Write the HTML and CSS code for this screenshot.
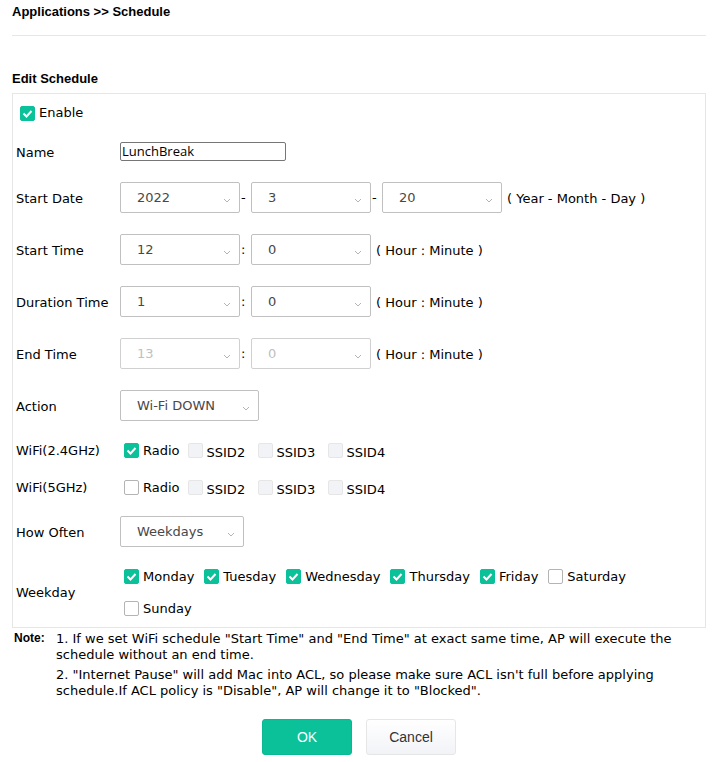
FILE: index.html
```
<!DOCTYPE html>
<html lang="en">
<head>
    <meta charset="UTF-8">
    <meta name="viewport" content="width=device-width, initial-scale=1.0">
    <title>Applications - Schedule</title>
    <link rel="stylesheet" href="styles.css">
</head>
<body>
    <h1>Applications &gt;&gt; Schedule</h1>
    <h2>Edit Schedule</h2>
    <form id="scheduleForm">
        <div class="panel">
            <div class="enable-row">
                <label class="check"><input type="checkbox" name="enable" checked>Enable</label>
            </div>

            <div class="row name-row">
                <label for="name">Name</label>
                <div class="field">
                    <input type="text" class="text-input" id="name" name="name" value="LunchBreak">
                </div>
            </div>

            <div class="row">
                <label for="startYear">Start Date</label>
                <div class="field">
                    <select id="startYear" name="startYear"><option>2022</option></select>
                    <span class="sep">-</span>
                    <select name="startMonth" aria-label="Start month"><option>3</option></select>
                    <span class="sep">-</span>
                    <select name="startDay" aria-label="Start day"><option>20</option></select>
                    <span class="hint">( Year - Month - Day )</span>
                </div>
            </div>

            <div class="row">
                <label for="startHour">Start Time</label>
                <div class="field">
                    <select id="startHour" name="startHour"><option>12</option></select>
                    <span class="sep">:</span>
                    <select name="startMinute" aria-label="Start minute"><option>0</option></select>
                    <span class="hint">( Hour : Minute )</span>
                </div>
            </div>

            <div class="row">
                <label for="durationHour">Duration Time</label>
                <div class="field">
                    <select id="durationHour" name="durationHour"><option>1</option></select>
                    <span class="sep">:</span>
                    <select name="durationMinute" aria-label="Duration minute"><option>0</option></select>
                    <span class="hint">( Hour : Minute )</span>
                </div>
            </div>

            <div class="row">
                <label for="endHour">End Time</label>
                <div class="field">
                    <select id="endHour" name="endHour" disabled><option>13</option></select>
                    <span class="sep">:</span>
                    <select name="endMinute" aria-label="End minute" disabled><option>0</option></select>
                    <span class="hint">( Hour : Minute )</span>
                </div>
            </div>

            <div class="row">
                <label for="action">Action</label>
                <div class="field">
                    <select class="select-action" id="action" name="action"><option>Wi-Fi DOWN</option></select>
                </div>
            </div>

            <div class="row wifi-row" role="group" aria-labelledby="wifi24">
                <span id="wifi24">WiFi(2.4GHz)</span>
                <div class="checks">
                    <label class="check"><input type="checkbox" name="radio24" checked>Radio</label>
                    <label class="check ssid"><input type="checkbox" name="ssid2_24" disabled><span>SSID2</span></label>
                    <label class="check ssid"><input type="checkbox" name="ssid3_24" disabled><span>SSID3</span></label>
                    <label class="check ssid"><input type="checkbox" name="ssid4_24" disabled><span>SSID4</span></label>
                </div>
            </div>

            <div class="row wifi-row" role="group" aria-labelledby="wifi5">
                <span id="wifi5">WiFi(5GHz)</span>
                <div class="checks">
                    <label class="check"><input type="checkbox" name="radio5">Radio</label>
                    <label class="check ssid"><input type="checkbox" name="ssid2_5" disabled><span>SSID2</span></label>
                    <label class="check ssid"><input type="checkbox" name="ssid3_5" disabled><span>SSID3</span></label>
                    <label class="check ssid"><input type="checkbox" name="ssid4_5" disabled><span>SSID4</span></label>
                </div>
            </div>

            <div class="row">
                <label for="howOften">How Often</label>
                <div class="field">
                    <select class="select-often" id="howOften" name="howOften"><option>Weekdays</option></select>
                </div>
            </div>

            <div class="row weekday-row" role="group" aria-labelledby="weekday">
                <span id="weekday">Weekday</span>
                <div class="checks">
                    <label class="check"><input type="checkbox" name="mon" checked>Monday</label>
                    <label class="check"><input type="checkbox" name="tue" checked>Tuesday</label>
                    <label class="check"><input type="checkbox" name="wed" checked>Wednesday</label>
                    <label class="check"><input type="checkbox" name="thu" checked>Thursday</label>
                    <label class="check"><input type="checkbox" name="fri" checked>Friday</label>
                    <label class="check"><input type="checkbox" name="sat">Saturday</label>
                    <label class="check"><input type="checkbox" name="sun">Sunday</label>
                </div>
            </div>
        </div>

        <div class="note">
            <strong>Note:</strong>
            <div class="note-text">
                <p>1. If we set WiFi schedule "Start Time" and "End Time" at exact same time, AP will execute the schedule without an end time.</p>
                <p>2. "Internet Pause" will add Mac into ACL, so please make sure ACL isn't full before applying schedule.If ACL policy is "Disable", AP will change it to "Blocked".</p>
            </div>
        </div>

        <div class="buttons">
            <button type="submit" class="btn btn-ok">OK</button>
            <button type="button" class="btn btn-cancel">Cancel</button>
        </div>
    </form>
</body>
</html>
```

FILE: styles.css
```
* {
    box-sizing: border-box;
}
body {
    margin: 0;
    padding: 4px 13px 0 12px;
    background-color: #fff;
    color: #000;
    font-family: Verdana, "DejaVu Sans", sans-serif;
    font-size: 13px;
    line-height: 16px;
}
h1, h2 {
    margin: 0;
    font-family: Arial, "Liberation Sans", sans-serif;
    font-size: 13px;
    line-height: 16px;
}
h1 {
    padding-bottom: 15px;
    border-bottom: 1px solid #e6e6e6;
}
h2 {
    padding: 35px 0 6px;
}
.panel {
    border: 1px solid #e6e6e6;
    padding: 0 3px;
}
.enable-row {
    display: flex;
    align-items: center;
    height: 38px;
    padding-left: 4px;
}
.row {
    display: grid;
    grid-template-columns: 104px 1fr;
    align-items: center;
    min-height: 52px;
}
.row > label {
    padding-top: 2px;
}
.name-row {
    min-height: 40px;
}
.wifi-row {
    min-height: 37px;
}
.weekday-row {
    min-height: 69px;
    padding-right: 32px;
}
.field {
    display: flex;
    align-items: center;
    padding-bottom: 2px;
}
.text-input {
    width: 166px;
    height: 19px;
    padding: 0 1px;
    border: 1px solid #767676;
    border-radius: 2px;
    font-family: "Open Sans", sans-serif;
    font-size: 13px;
}
select {
    appearance: none;
    width: 120px;
    height: 31px;
    padding: 0 24px 0 16px;
    border: 1px solid #c0c0c0;
    border-radius: 2px;
    background: #fff url("data:image/svg+xml,%3Csvg xmlns='http://www.w3.org/2000/svg' width='8' height='5' viewBox='0 0 8 5'%3E%3Cpath d='M1 1l3 3 3-3' fill='none' stroke='%23b4b4b8'/%3E%3C/svg%3E") no-repeat right 8px top 15px;
    color: #484848;
    font-family: inherit;
    font-size: 13px;
}
select:disabled {
    border-color: #d0d0d0;
    color: #c0c0c0;
    opacity: 1;
}
.select-action {
    width: 139px;
}
.select-often {
    width: 124px;
}
.sep {
    width: 11px;
    padding: 2px 0 0 1px;
}
.hint {
    padding: 4px 0 0 5px;
}
.checks {
    display: flex;
    flex-wrap: wrap;
    column-gap: 8px;
    padding-left: 4px;
}
.check {
    display: flex;
    align-items: center;
    gap: 4px;
}
.weekday-row .checks {
    column-gap: 10px;
}
.weekday-row .check {
    height: 32px;
}
.ssid {
    min-width: 62px;
}
.ssid span {
    padding-top: 5px;
}
input[type="checkbox"] {
    appearance: none;
    width: 15px;
    height: 15px;
    margin: 0;
    border: 1px solid #b4b4b4;
    border-radius: 2px;
    background-color: #fff;
}
input[type="checkbox"]:checked {
    border-color: #0ac19a;
    background: #0ac19a url("data:image/svg+xml,%3Csvg xmlns='http://www.w3.org/2000/svg' width='13' height='13' viewBox='0 0 13 13'%3E%3Cpath d='M2.5 6.5l3 3 5-5.5' fill='none' stroke='%23fff' stroke-width='2'/%3E%3C/svg%3E") no-repeat center;
}
input[type="checkbox"]:disabled {
    border-color: #e6e6e6;
    background-color: #f2f3f7;
}
.note {
    display: flex;
    padding: 2px 0 0 2px;
}
.note strong {
    flex: 0 0 42px;
    font-family: Arial, "Liberation Sans", sans-serif;
    font-size: 12px;
}
.note p {
    margin: 0 0 4px;
}
.note-text {
    padding-top: 1px;
}
.buttons {
    display: flex;
    justify-content: center;
    gap: 14px;
    padding-top: 16px;
}
.btn {
    width: 90px;
    height: 36px;
    border: 1px solid #e6e6e6;
    border-radius: 3px;
    font-family: Arial, "Liberation Sans", sans-serif;
    font-size: 14px;
    cursor: pointer;
}
.btn-ok {
    border-color: #0ab893;
    background-color: #0ac19a;
    color: #fff;
}
.btn-cancel {
    background: linear-gradient(#fff, #f2f3f7);
    color: #333;
}
```
